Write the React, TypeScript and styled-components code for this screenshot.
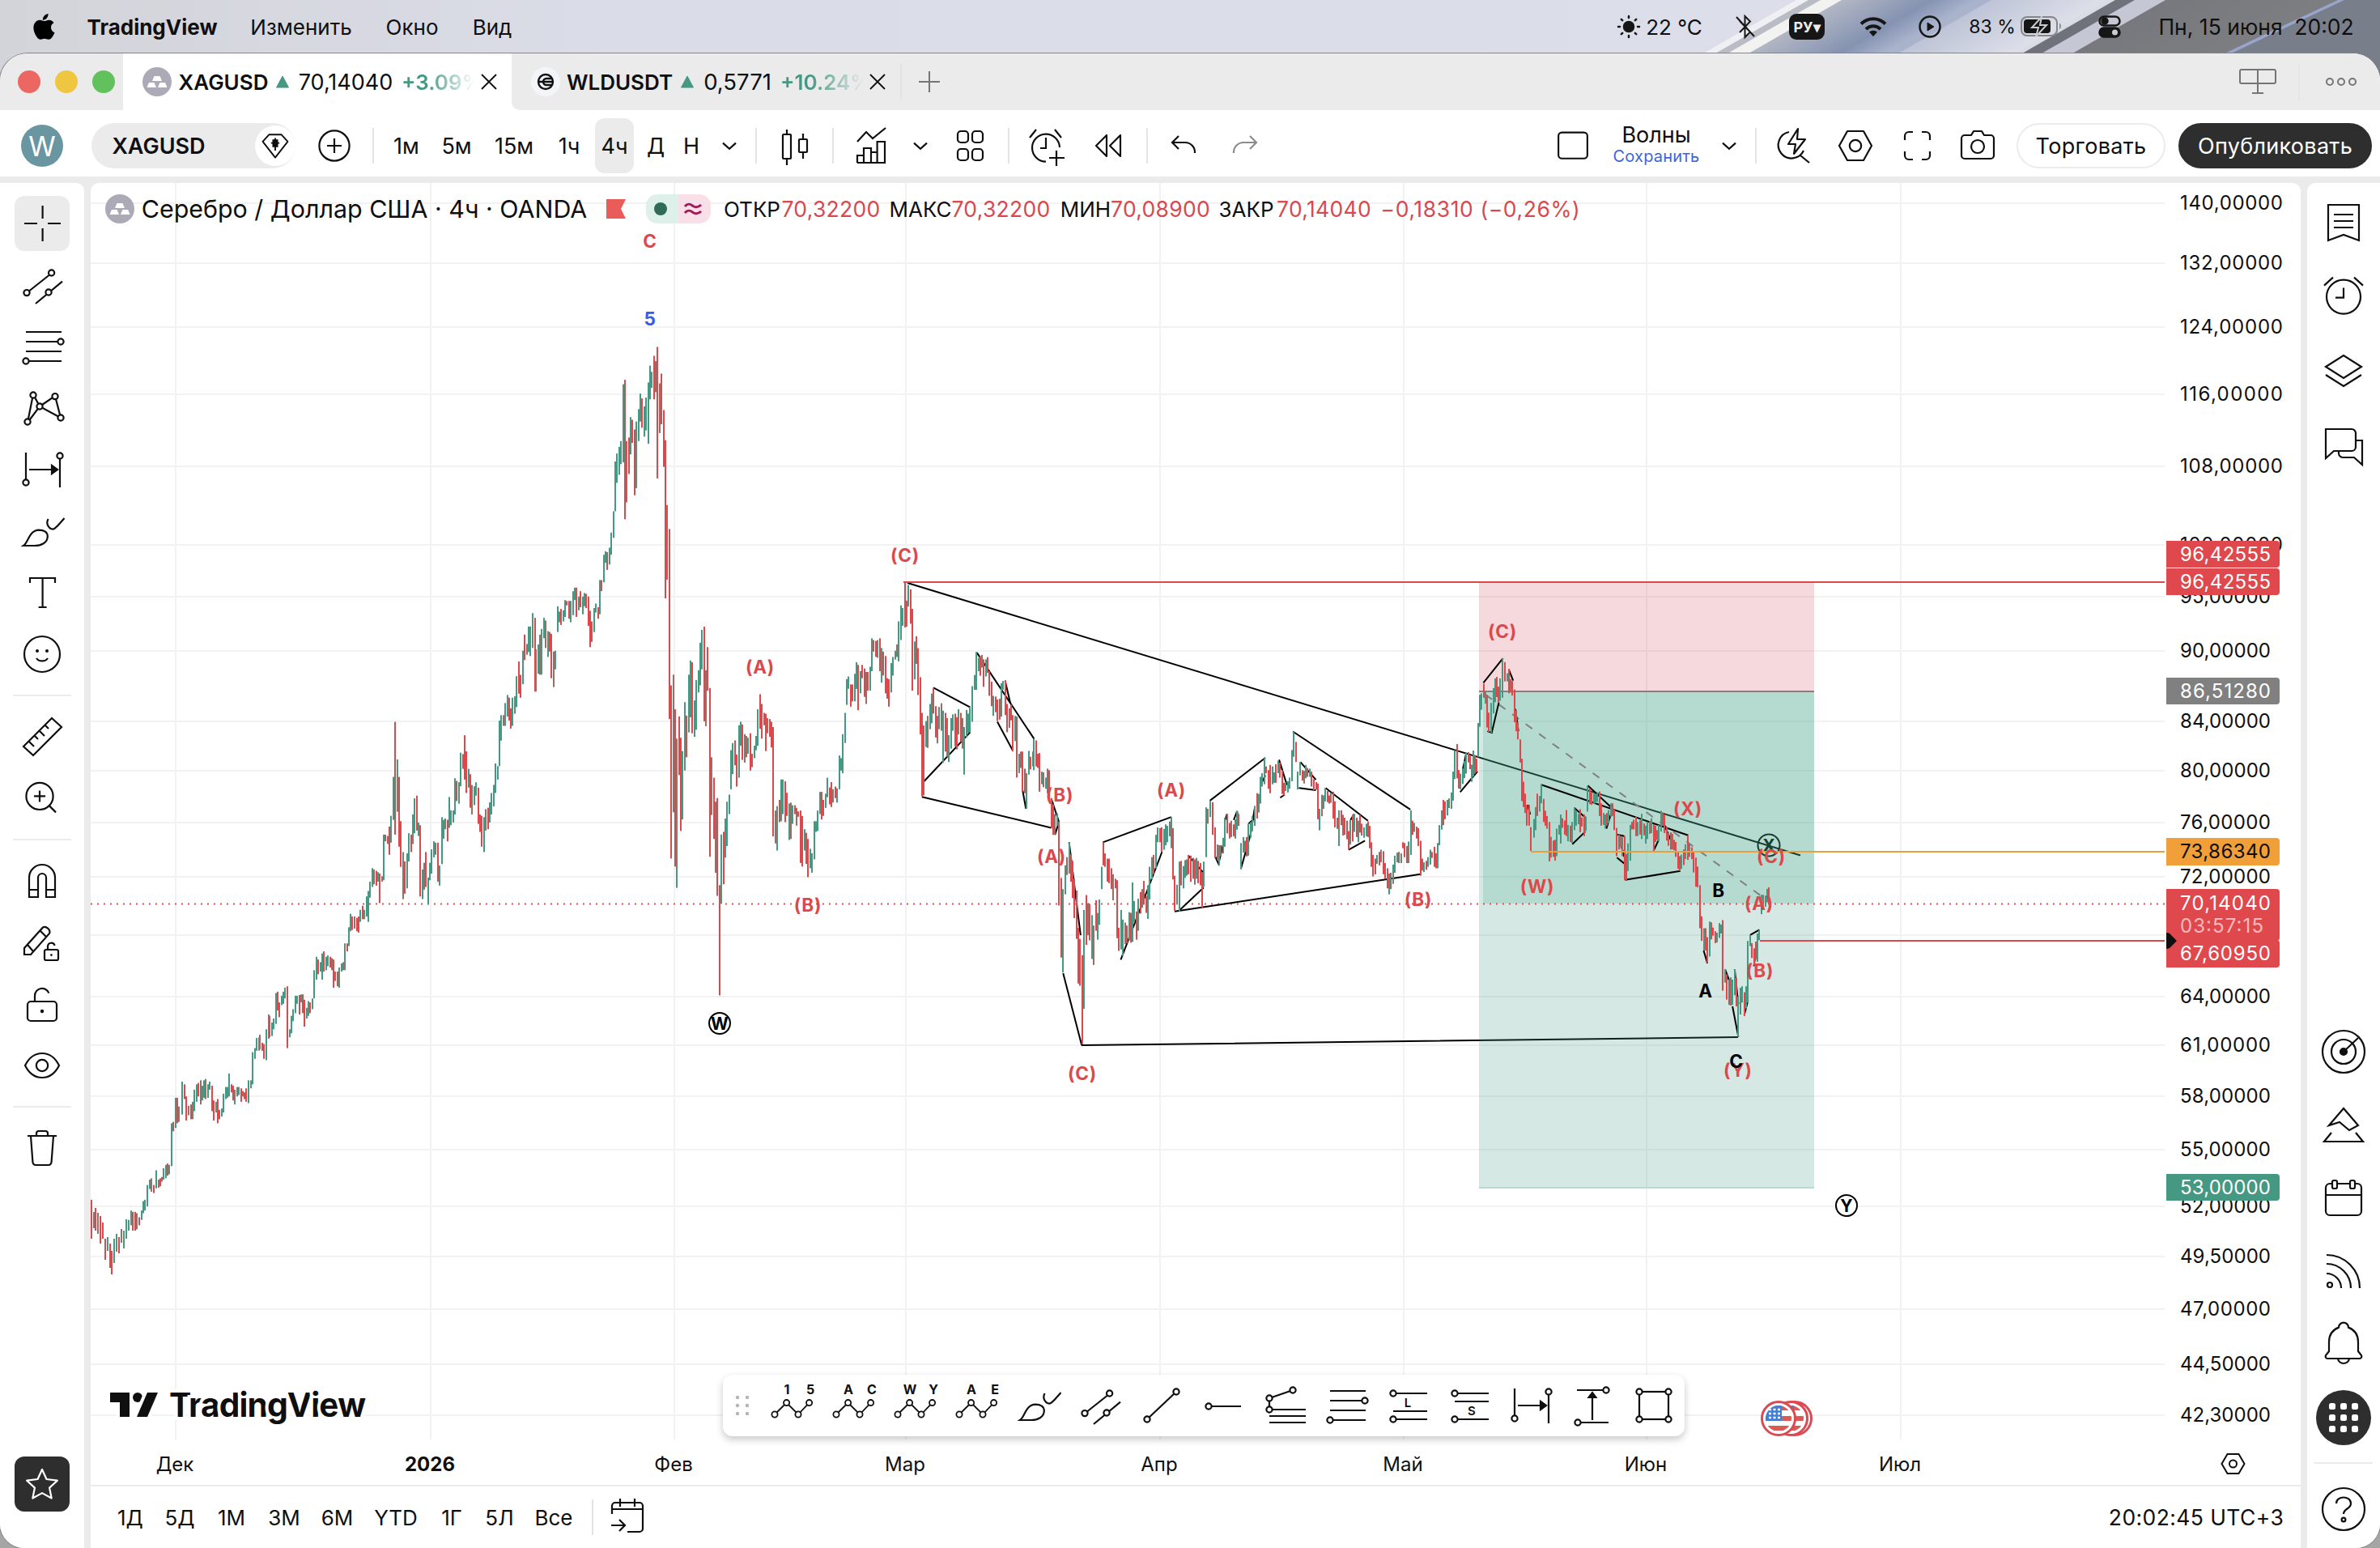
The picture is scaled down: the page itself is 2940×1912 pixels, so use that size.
import React from 'react';
import styled, { createGlobalStyle } from 'styled-components';

const GlobalStyle = createGlobalStyle`
  * {
    box-sizing: border-box;
  }
  body {
    margin: 0;
    width: 2940px;
    height: 1912px;
    overflow: hidden;
    background: #a5a5a5;
    color: #0f0f0f;
    font-family: Inter, 'Noto Sans', sans-serif;
  }
  svg {
    display: block;
    flex: none;
  }
`;

interface BoxStyle {
  $w?: number;
  $ml?: number;
}

interface LabelStyle extends BoxStyle {
  $size?: number;
  $weight?: number;
  $color?: string;
  $ls?: number;
}

const Page = styled.div`
  width: 2940px;
  height: 1912px;
  display: flex;
  flex-direction: column;
  position: relative;
`;

const Wallpaper = styled.svg`
  position: absolute;
  left: 0;
  top: 0;
`;

const MenuBar = styled.div`
  height: 66px;
  display: flex;
  align-items: center;
  position: relative;
`;

const AppWindow = styled.div`
  flex: 1;
  display: flex;
  flex-direction: column;
  background: #ebebeb;
  border-radius: 34px 34px 30px 30px;
  overflow: hidden;
  position: relative;
  box-shadow: 0 0 0 1px #85858c;
`;

const Label = styled.span<LabelStyle>`
  flex: none;
  display: flex;
  justify-content: center;
  white-space: nowrap;
  width: ${(p) => (p.$w ? `${p.$w}px` : 'auto')};
  margin-left: ${(p) => p.$ml || 0}px;
  font-size: ${(p) => p.$size || 27}px;
  font-weight: ${(p) => p.$weight || 400};
  color: ${(p) => p.$color || '#0f0f0f'};
  letter-spacing: ${(p) => p.$ls || 0}px;
`;

const Slot = styled.div<BoxStyle>`
  flex: none;
  width: ${(p) => p.$w || 56}px;
  margin-left: ${(p) => p.$ml || 0}px;
  display: flex;
  align-items: center;
  justify-content: center;
`;

const Spacer = styled.div`
  flex: 1;
`;

const InputBadge = styled(Slot)`
  height: 32px;
  border-radius: 9px;
  background: #161616;
  color: #ececec;
  font-size: 18px;
  font-weight: 700;
`;

const TabStrip = styled.div`
  height: 70px;
  display: flex;
  background: #ebebeb;
`;

const Lights = styled.div`
  width: 152px;
  display: flex;
  align-items: center;
  gap: 18px;
  padding-left: 22px;
`;

const Light = styled.i<{ $color: string }>`
  width: 28px;
  height: 28px;
  border-radius: 50%;
  background: ${(p) => p.$color};
`;

const Tab = styled.div<{ $active?: boolean; $w: number }>`
  width: ${(p) => p.$w}px;
  display: flex;
  align-items: center;
  background: ${(p) => (p.$active ? '#fff' : 'transparent')};
  border-radius: 8px 8px 0 0;
`;

const TabFill = styled.div`
  flex: 1;
  background: #fff;
  display: flex;
`;

const TabRest = styled.div`
  flex: 1;
  display: flex;
  align-items: center;
  background: #ebebeb;
  border-bottom-left-radius: 10px;
`;

const Change = styled(Label)<{ $tone: string }>`
  justify-content: flex-start;
  font-weight: 600;
  background: linear-gradient(90deg, #459882 35%, ${(p) => p.$tone} 100%);
  background-clip: text;
  -webkit-background-clip: text;
  color: transparent;
`;

const Divider = styled.i<{ $ml: number }>`
  flex: none;
  width: 2px;
  height: 44px;
  margin-left: ${(p) => p.$ml}px;
  background: #e4e4e4;
`;

const Toolbar = styled.div`
  height: 82px;
  margin-bottom: 8px;
  display: flex;
  align-items: center;
  background: #fff;
  padding-top: 6px;
`;

const Avatar = styled(Slot)`
  height: 52px;
  border-radius: 50%;
  background: #6996a0;
  color: #fff;
  font-size: 34px;
`;

const SymbolPill = styled.div`
  flex: none;
  width: 252px;
  height: 56px;
  margin-left: 35px;
  border-radius: 28px;
  background: #ebebeb;
  display: flex;
  align-items: center;
`;

const Knob = styled(Slot)`
  height: 50px;
  border-radius: 50%;
  background: #fff;
`;

const ActiveInterval = styled(Label)`
  height: 68px;
  align-items: center;
  border-radius: 12px;
  background: #ebebeb;
`;

const LayoutName = styled.div`
  flex: none;
  width: 110px;
  margin-left: 28px;
  display: flex;
  flex-direction: column;
  align-items: center;
  line-height: 26px;
`;

const PillButton = styled.div<{ $dark?: boolean; $w: number; $ml: number }>`
  flex: none;
  width: ${(p) => p.$w}px;
  height: 56px;
  margin-left: ${(p) => p.$ml}px;
  border-radius: 28px;
  border: 2px solid ${(p) => (p.$dark ? '#2e2e2e' : '#ebebeb')};
  background: ${(p) => (p.$dark ? '#2e2e2e' : '#fff')};
  color: ${(p) => (p.$dark ? '#fff' : '#0f0f0f')};
  display: flex;
  align-items: center;
  justify-content: center;
  font-size: 27px;
  letter-spacing: 0.3px;
`;

const Workspace = styled.div`
  flex: 1;
  display: flex;
  gap: 8px;
`;

const LeftRail = styled.div`
  width: 104px;
  background: #fff;
  border-top-right-radius: 10px;
  display: flex;
  flex-direction: column;
  align-items: center;
  padding: 12px 0 45px;
`;

const RailItem = styled.div`
  width: 68px;
  height: 76px;
  display: flex;
  align-items: center;
  justify-content: center;
`;

const ActiveTool = styled.div`
  width: 68px;
  height: 68px;
  border-radius: 12px;
  background: #ebebeb;
  display: flex;
  align-items: center;
  justify-content: center;
`;

const RailRule = styled.i<{ $gap?: number }>`
  width: 72px;
  height: 2px;
  margin: ${(p) => p.$gap || 12}px 0;
  background: #ebebeb;
`;

const StarButton = styled(ActiveTool)`
  background: #2e2e2e;
`;

const ChartColumn = styled.div`
  width: 2730px;
  background: #fff;
  border-radius: 10px 10px 0 0;
  display: flex;
  flex-direction: column;
  overflow: hidden;
`;

const ChartArea = styled.div`
  height: 1608px;
  position: relative;
`;

const Legend = styled.div`
  position: absolute;
  left: 16px;
  top: 12px;
  height: 40px;
  display: flex;
  align-items: center;
`;

const StatusPill = styled.div`
  width: 80px;
  height: 36px;
  margin-left: 24px;
  border-radius: 14px;
  background: linear-gradient(90deg, #def0ea 50%, #f8dfe8 50%);
  display: flex;
  align-items: center;
  justify-content: space-around;
`;

const DrawingBar = styled.div`
  position: absolute;
  left: 781px;
  top: 1472px;
  width: 1188px;
  height: 76px;
  border-radius: 12px;
  background: #fff;
  box-shadow: 0 4px 10px rgba(0, 0, 0, 0.22);
  display: flex;
  align-items: center;
`;

const RangeBar = styled.div`
  flex: 1;
  border-top: 2px solid #ebebeb;
  display: flex;
  align-items: center;
  padding-left: 31px;
`;

const RightRail = styled.div`
  flex: 1;
  background: #fff;
  border-top-left-radius: 10px;
  display: flex;
  flex-direction: column;
  align-items: center;
  padding: 3px 0 2px;
`;

const WidgetItem = styled.div<{ $h?: number }>`
  height: ${(p) => p.$h || 92}px;
  display: flex;
  align-items: center;
`;

const AppsButton = styled.div`
  width: 68px;
  height: 68px;
  border-radius: 50%;
  background: #2e2e2e;
  display: flex;
  align-items: center;
  justify-content: center;
`;

// ---------- icons, all on a 28 unit grid ----------

interface IconProps {
  size?: number;
  color?: string;
  sw?: number;
  children: React.ReactNode;
}

function Icon({ size = 56, color = '#0f0f0f', sw = 1.1, children }: IconProps) {
  return (
    <svg width={size} height={size} viewBox="0 0 28 28" fill="none" stroke={color} strokeWidth={sw}>
      {children}
    </svg>
  );
}

function Dots({ at, r = 1.8 }: { at: number[][]; r?: number }) {
  return (
    <>
      {at.map(([x, y]) => (
        <circle key={`${x}-${y}`} cx={x} cy={y} r={r} fill="#fff" />
      ))}
    </>
  );
}

const Chevron = () => (
  <Icon>
    <path d="M10 12.3l4 3.600 4-3.600" />
  </Icon>
);

const Close = () => (
  <Icon size={28} sw={1.8}>
    <path d="M5 5l18 18M23 5L5 23" />
  </Icon>
);

const Up = () => (
  <svg width="18" height="16" viewBox="0 0 18 16">
    <path d="M9 1l7.500 14h-15z" fill="#459882" stroke="#459882" strokeLinejoin="round" />
  </svg>
);

const SilverLogo = () => (
  <svg width="36" height="36" viewBox="0 0 36 36">
    <circle cx="18" cy="18" r="18" fill="#adaab8" />
    <path d="M14.500 11h7l2.500 6H12zM8 19h6.500l2.500 6H5.500zM21.500 19H28l2.500 6H19z" fill="#fff" />
  </svg>
);

const Brush = () => (
  <Icon>
    <path d="M2.500 23C5.500 21 6 13.500 12 13.300c3.400 0 5.400 1.500 5.400 4 0 4-4 5.700-8 5.700zM17.800 6.500c-1.800 3 .6 6.300 2.800 6.300 1.900 0 4.500-4 7.200-6.800" />
  </Icon>
);

const Channel = () => (
  <Icon>
    <path d="M5 18.500L19.500 7M10 25.500L26.500 11.800" />
    <Dots at={[[4.500, 18.800], [19.800, 6.500], [18, 18.500]]} />
  </Icon>
);

const FibLines = () => (
  <Icon>
    <path d="M4 5h22M4 11h22M4 17h22M4 23h22" />
    <Dots at={[[25.500, 11], [4, 23]]} />
  </Icon>
);

const DateRange = () => (
  <Icon>
    <path d="M4 3.500V22M25 6v19M6 14h15" />
    <path d="M20 11.500l3.500 2.500-3.500 2.500z" fill="#0f0f0f" />
    <Dots at={[[4, 22], [25, 5.500]]} />
  </Icon>
);

function Wave({ a, b }: { a: string; b: string }) {
  return (
    <Icon sw={0.9}>
      <path d="M3 19.500l7.300-7.200 7.200 7.200 6.800-7.200" />
      <Dots at={[[3, 19.500], [10.300, 12.300], [17.500, 19.500], [24.300, 12.300]]} />
      <g fill="#0f0f0f" stroke="none" fontSize="8" fontWeight="700" textAnchor="middle">
        <text x="10.500" y="7">{a}</text>
        <text x="25" y="7">{b}</text>
      </g>
    </Icon>
  );
}

const Padlock = () => (
  <>
    <rect x="5" y="12.500" width="18" height="12" rx="2" />
    <path d="M9.500 12.500V9a4.500 4.500 0 0 1 8.700-1.700" />
    <circle cx="14" cy="18.500" r="1.100" fill="#0f0f0f" stroke="none" />
  </>
);

const leftTools: React.ReactNode[][] = [
  [
    <Channel key="channel" />,
    <FibLines key="fib" />,
    <Icon key="pattern">
      <path d="M5 23L8.500 5.500 12.500 13 5 23M12.500 13L22 6.500 25.500 20z" />
      <Dots at={[[5, 22.500], [8.500, 6], [12.500, 13], [22, 6.800], [25.500, 20]]} />
    </Icon>,
    <DateRange key="range" />,
    <Brush key="brush" />,
    <Icon key="text">
      <path d="M6.500 8V5h15.500v3M14.300 5v18M11.800 23h5" />
    </Icon>,
    <Icon key="smile">
      <circle cx="14" cy="14" r="11" />
      <path d="M10.500 16.500c1.500 2.300 5.500 2.300 7 0" />
      <circle cx="11" cy="12" r="1" fill="#0f0f0f" stroke="none" />
      <circle cx="17" cy="12" r="1" fill="#0f0f0f" stroke="none" />
    </Icon>,
  ],
  [
    <Icon key="ruler">
      <path d="M2.500 20L20 2.500l6 5.500L8.500 25.500zM6 17l3 3M9.500 13.500l2 2M12.500 10.500l3 3M16 7l2 2" />
    </Icon>,
    <Icon key="zoom">
      <circle cx="12.500" cy="12.700" r="8.300" />
      <path d="M9 12.700h7M12.500 9.200v7M18.500 18.700l4 4" />
    </Icon>,
  ],
  [
    <Icon key="magnet">
      <path d="M6 24V12a8 8 0 0 1 16 0V24h-5.500V12a2.500 2.500 0 0 0-5 0V24zM6 19.500h5.500M16.500 19.500H22" />
    </Icon>,
    <Icon key="pencil">
      <path d="M3 17.500v4h4L18.500 8.500c1-2-2-5-4-3.800zM12.500 6.500l4 4M5 15.500l3.500 4" />
      <rect x="15.500" y="18.500" width="8.500" height="6.500" rx="1" />
      <path d="M17.500 18.500V16.500a2.200 2.200 0 0 1 4.300-.6" />
      <circle cx="19.700" cy="21.800" r=".7" fill="#0f0f0f" stroke="none" />
    </Icon>,
    <Icon key="lock">
      <Padlock />
    </Icon>,
    <Icon key="eye">
      <path d="M3.500 14c5-10 16-10 21 0-5 10-16 10-21 0z" />
      <circle cx="14" cy="14" r="3.600" />
    </Icon>,
  ],
];

const drawingTools: React.ReactNode[] = [
  <Wave key="w1" a="1" b="5" />,
  <Wave key="w2" a="A" b="C" />,
  <Wave key="w3" a="W" b="Y" />,
  <Wave key="w4" a="A" b="E" />,
  <Brush key="brush" />,
  <Channel key="channel" />,
  <Icon key="trend">
    <path d="M5 22.500L23 5.500" />
    <Dots at={[[5, 22.500], [23, 5.500]]} />
  </Icon>,
  <Icon key="ray">
    <path d="M4 14.500h21" />
    <Dots at={[[5, 14.500]]} />
  </Icon>,
  <Icon key="fibext">
    <path d="M4.500 16.500v-7L19 4.500M4.500 16.500H27M4.500 20.500H27M4.500 24.500H27" />
    <Dots at={[[4.500, 9.500], [4.500, 16.500], [19, 4.500]]} />
  </Icon>,
  <FibLines key="fib" />,
  <Icon key="long">
    <path d="M5 6.500h21M5 17.500h21M5 22.500h21" />
    <Dots at={[[5, 6.500], [5, 22.500]]} />
    <text x="14" y="15.200" fontSize="7.500" fontWeight="600" textAnchor="middle" fill="#0f0f0f" stroke="none">L</text>
  </Icon>,
  <Icon key="short">
    <path d="M5 6.500h21M5 11.500h21M5 22.500h21" />
    <Dots at={[[5, 6.500], [5, 22.500]]} />
    <text x="15.500" y="20" fontSize="7.500" fontWeight="600" textAnchor="middle" fill="#0f0f0f" stroke="none">S</text>
  </Icon>,
  <DateRange key="range" />,
  <Icon key="pricerange">
    <path d="M4.500 4.500h18M5 24.500h19M14 23V7" />
    <path d="M11.800 9L14 6l2.200 3z" fill="#0f0f0f" />
    <Dots at={[[22.500, 4.500], [5, 24.500]]} />
  </Icon>,
  <Icon key="rect">
    <rect x="5" y="5.500" width="18" height="17" />
    <Dots at={[[5, 5.500], [23, 5.500], [5, 22.500], [23, 22.500]]} />
  </Icon>,
];

const topWidgets: React.ReactNode[] = [
  <Icon key="list">
    <path d="M4.500 3h19v22L14 21.500 4.500 25zM8 9h12M8 13h12M8 17h12" />
  </Icon>,
  <Icon key="alarm">
    <circle cx="14" cy="13.800" r="10.500" />
    <path d="M14 8.300v6H9M2 6.800L7.500 1.800M26 6.800l-5.500-5" />
  </Icon>,
  <Icon key="layers">
    <path d="M3 11l11-7 11 7-11 7zM3 16l11 7 11-7" />
  </Icon>,
  <Icon key="chat">
    <path d="M3 3.500h16a2.500 2.500 0 0 1 2.500 2.500v8.500a2.500 2.500 0 0 1-2.500 2.500H8L3 21.500zM21.500 10.500h4v15l-5-4.500h-7a2.500 2.500 0 0 1-2.500-2.500V17" />
  </Icon>,
];

const bottomWidgets: React.ReactNode[] = [
  <Icon key="radar">
    <circle cx="14" cy="14" r="13" />
    <circle cx="14" cy="14" r="7.500" />
    <path d="M14 14l9-8.500" />
    <circle cx="14" cy="14" r="2" fill="#0f0f0f" />
  </Icon>,
  <Icon key="pine">
    <path d="M5 14.500L14 4l9 10.500-5.500 3-6-5zM6.500 19L2 24.500h24L21.500 19" />
  </Icon>,
  <Icon key="calendar">
    <rect x="3" y="5" width="22" height="19.500" rx="2.500" />
    <path d="M3 12h22" />
    <rect x="7" y="3" width="3" height="5" fill="#fff" rx="1" />
    <rect x="18" y="3" width="3" height="5" fill="#fff" rx="1" />
  </Icon>,
  <Icon key="feed">
    <circle cx="5.500" cy="22.500" r="1.500" />
    <path d="M3.500 15.500a9 9 0 0 1 9 9M3.500 9.500a15 15 0 0 1 15 15M3.500 4a20.500 20.500 0 0 1 20.500 20.500" />
  </Icon>,
  <Icon key="bell">
    <path d="M11 3.800a3 3 0 0 1 6 0c4 1.500 6 4.500 6 9v5.700l2 2.500c.5 1-.2 2-1 2H4c-.8 0-1.500-1-1-2l2-2.500v-5.700c0-4.500 2-7.500 6-9zM10.500 23c.5 4 6.500 4 7 0" />
  </Icon>,
];

// ---------- chart data ----------

interface Series {
  x: number;
  y: number;
  kx: number;
  ky: number;
  bars: string;
  lines: string;
}

// each bar is "x high low colour", each line is "x y x y ..."
const series: Series[] = [
  {
    x: 0,
    y: 0,
    kx: 1,
    ky: 1,
    bars:
      '113 1482 1530 r,116 1497 1517 m,118 1492 1520 r,121 1498 1524 m,124 1502 1536 r,127 1510 1530 r,130 1530 1556 r,133 1528 1545 g,136 1536 1566 r,138 1545 1574 r,141 1530 1560 g,144 1524 1546 g,147 1528 1548 r,150 1518 1535 m,153 1520 1542 g,156 1506 1530 g',
    lines: '',
  },
  {
    x: 0,
    y: 220,
    kx: 0.4464,
    ky: 0.8291,
    bars:
      '357 1552 1568 g,362 1538 1560 g,368 1540 1568 r,374 1540 1568 r,379 1542 1566 m,385 1548 1560 r,391 1538 1552 g,396 1524 1542 g,402 1522 1538 g,408 1500 1532 g,415 1492 1506 g,420 1490 1510 m,425 1500 1512 r,432 1478 1505 g,438 1492 1504 m,443 1490 1502 r,448 1488 1495 m,452 1475 1492 g,459 1470 1490 g,463 1468 1486 r,468 1470 1484 g,475 1408 1472 g,480 1406 1420 r,486 1370 1415 g,491 1370 1408 r,496 1383 1406 m,505 1346 1395 g,510 1350 1372 r,516 1368 1404 r,521 1382 1396 m,528 1380 1402 r,533 1376 1402 g,538 1358 1390 g,544 1350 1376 g,549 1348 1368 r,555 1344 1380 m,560 1352 1374 g,565 1344 1370 g,570 1342 1372 m,576 1350 1370 g,580 1346 1358 g,587 1352 1390 r,592 1374 1404 r,598 1376 1392 g,603 1372 1408 r,608 1388 1402 r,614 1386 1398 g,619 1364 1392 g,625 1354 1372 g,630 1354 1370 g,634 1334 1368 g,641 1350 1362 r,645 1352 1374 r,650 1358 1380 g,656 1354 1368 m,661 1354 1366 g,667 1356 1376 r,672 1360 1368 m,677 1362 1372 r,682 1356 1376 r,688 1344 1378 g,694 1344 1356 g,700 1302 1350 g,705 1296 1312 g,710 1281 1300 g,716 1280 1300 g,720 1276 1298 m,725 1288 1300 r,730 1290 1312 r,737 1268 1314 g,743 1246 1282 g,747 1248 1280 r,753 1258 1278 g,757 1252 1268 g,764 1214 1260 g,768 1212 1240 r,773 1228 1250 r,779 1218 1232 g,784 1212 1230 g,789 1206 1222 g,795 1204 1296 r,801 1268 1280 g,806 1248 1274 g,811 1238 1256 g,817 1218 1244 g,823 1218 1230 g,828 1217 1246 r,834 1216 1228 g,838 1216 1244 r,843 1224 1264 r,849 1236 1252 g,854 1226 1248 g,859 1228 1244 r,864 1222 1238 g,870 1180 1222 g,876 1160 1194 g,881 1164 1186 r,886 1168 1182 g,892 1155 1194 g,897 1152 1182 r,902 1160 1180 g,908 1158 1174 g,913 1160 1176 r,918 1162 1180 m,923 1164 1206 r,928 1182 1196 m,934 1182 1204 r,939 1176 1206 g,945 1170 1182 g,950 1168 1180 m,955 1140 1180 g,961 1140 1152 r,966 1116 1144 g,970 1096 1122 g,975 1100 1120 r,981 1100 1118 m,987 1102 1122 r,992 1100 1124 r,997 1090 1108 g,1003 1084 1104 r,1008 1090 1104 g,1014 1070 1100 g,1019 1062 1108 g,1024 1048 1072 g,1030 1028 1056 g,1036 1030 1052 m,1041 1032 1054 r,1046 1034 1048 g,1051 1036 1080 r,1057 1040 1048 m,1062 978 1046 g,1067 978 988 r,1073 980 992 m,1077 966 1008 r,1083 950 990 g,1088 892 956 g,1093 810 978 r,1100 866 944 g,1104 892 996 r,1109 958 1026 r,1116 1004 1074 m,1121 1018 1066 r,1126 1006 1058 g,1132 976 1018 g,1137 978 1004 r,1143 948 992 g,1148 924 976 g,1153 920 972 r,1158 960 980 g,1163 964 1070 r,1169 1030 1074 g,1174 1020 1060 m,1178 1004 1056 r,1185 1042 1082 g,1190 1020 1046 g,1195 1000 1036 g,1201 988 1012 g,1206 990 1008 m,1211 990 1048 r,1216 1024 1054 g,1222 952 1022 g,1228 956 984 g,1233 954 970 m,1238 956 988 r,1243 922 968 g,1248 942 964 g,1254 942 960 g,1259 894 948 g,1264 898 928 r,1270 900 932 g,1275 856 906 g,1281 858 880 r,1286 830 896 r,1290 854 916 r,1296 880 908 g,1301 888 938 r,1307 904 948 m,1312 906 934 g,1317 900 920 g,1323 908 962 r,1328 948 974 r,1333 950 996 r,1339 952 1004 g,1344 940 972 m,1350 938 970 r,1355 930 960 g,1360 916 948 g,1366 904 936 g,1371 872 916 g,1377 876 896 g,1382 808 876 g,1387 800 838 g,1393 800 816 m,1398 782 816 g,1404 770 802 g,1409 774 808 r,1413 790 820 r,1419 774 816 g,1424 772 798 g,1429 742 788 g,1436 720 768 r,1441 740 774 r,1447 704 754 g,1452 680 718 r,1458 694 710 m,1463 668 706 g,1468 668 712 g,1474 648 700 g',
    lines: '',
  },
  {
    x: 660,
    y: 400,
    kx: 0.3333,
    ky: 0.5485,
    bars:
      '2 662 828 r,6 733 828 m,15 722 788 g,21 700 790 m,27 687 790 g,37 662 708 g,43 668 730 m,51 692 750 g,57 694 738 r,63 698 798 r,72 738 818 m,78 736 778 g,87 636 694 g,93 648 672 g,99 642 678 r,108 645 670 g,114 622 660 g,120 624 634 r,129 624 664 r,135 624 672 g,144 602 656 g,150 594 622 g,156 594 660 r,165 614 645 g,171 602 638 r,180 614 654 g,186 606 636 g,192 608 640 r,201 614 680 r,207 646 728 r,213 670 716 r,222 640 694 g,228 630 650 g,237 638 664 r,243 577 654 g,249 577 602 r,258 520 582 g,264 512 538 g,270 514 554 r,279 504 542 g,285 470 520 g,294 422 482 g,300 310 422 g,306 292 358 g,315 277 340 g,321 264 316 g,330 136 312 g,336 126 440 r,342 264 402 m,351 256 338 r,357 210 294 g,363 216 268 r,372 238 386 r,378 220 370 g,387 192 264 g,393 157 220 g,399 168 234 r,408 186 254 g,414 166 240 g,423 132 270 g,429 94 170 g,435 108 144 g,444 72 170 r,450 84 154 m,456 52 348 r,465 134 246 m,471 112 226 r,480 194 322 r,486 262 618 r,492 408 576 m,501 462 890 r,507 814 1204 r,516 790 1100 m,522 868 1222 r,528 934 1270 g,537 884 1016 r,543 932 1142 r,549 962 1116 g,558 852 1006 g,564 882 976 r,573 790 920 g,579 758 886 g,585 762 922 r,594 848 930 g,600 802 914 g,609 780 830 g,615 718 814 g,621 689 778 g,630 682 895 r,636 780 906 m,642 728 826 r,651 820 1200 r,657 976 1106 m,666 1022 1160 r,672 1076 1236 m,678 1068 1288 r,687 1264 1512 r,693 1150 1306 g,702 1144 1262 r,708 1114 1202 g,714 1076 1176 g,723 1060 1104 g,729 960 1048 g,735 944 1014 g,744 938 994 r,750 970 1042 r,759 904 1022 g,765 896 950 g,771 902 982 r,780 924 988 m,786 928 976 m,792 932 968 g,801 922 1006 r,807 968 998 r,816 950 978 g,822 928 960 g,828 868 950 g,837 834 912 r,843 856 934 r,852 876 904 r,858 878 962 r,864 888 922 m,873 890 930 r,879 896 954 r,885 908 1154 r,894 1096 1170 m,900 1086 1186 g,909 1072 1122 r,915 1026 1120 g,921 1026 1104 g,930 1030 1122 r,936 1056 1108 r,945 1080 1162 g,951 1078 1160 m,957 1084 1126 g,966 1084 1104 r,972 1090 1130 m,978 1098 1110 r,987 1096 1214 r,993 1108 1222 r,1002 1138 1186 g,1008 1146 1216 r,1014 1160 1246 r,1023 1182 1226 g,1029 1192 1236 g,1038 1120 1206 g,1044 1120 1144 g,1050 1096 1142 g,1059 1054 1104 g,1065 1054 1116 r,1071 1072 1108 r,1080 1058 1090 g,1086 1022 1066 g,1095 1044 1082 r,1101 1032 1088 r,1107 1048 1078 m,1116 1042 1068 r,1122 1046 1078 g,1131 972 1048 g,1137 978 1006 g,1143 924 1012 g,1152 876 944 g,1158 800 858 g,1164 794 822 g,1173 812 862 r,1179 812 850 r,1188 788 850 g,1194 762 822 g,1200 768 870 r,1209 782 832 g,1215 768 798 r,1224 776 840 r,1230 784 856 m,1236 784 826 r,1245 772 826 g,1251 708 782 g,1257 712 738 r,1266 714 750 r,1272 712 752 g,1281 708 782 r,1287 730 808 g,1293 738 792 r,1302 748 832 r,1308 798 844 r,1314 800 862 r,1323 764 830 g,1329 750 792 g,1338 736 756 g,1344 722 750 m,1350 670 760 g,1359 634 712 g,1365 640 680 g',
    lines: '',
  },
  {
    x: 1080,
    y: 650,
    kx: 0.4592,
    ky: 0.4592,
    bars:
      '83 148 272 r,87 200 270 m,92 158 216 g,98 170 262 r,103 222 442 r,108 310 412 g,113 296 370 r,118 328 454 r,124 406 560 r,129 502 726 r,132 536 724 r,139 524 594 g,144 510 596 m,150 478 546 g,155 450 530 g,160 434 504 r,166 484 568 r,170 510 584 m,175 486 546 g,181 476 550 m,185 496 636 g,191 502 606 r,196 516 620 m,201 562 634 g,206 516 598 g,211 506 550 g,217 504 592 r,222 514 600 r,227 492 560 g,232 502 580 r,237 516 598 m,242 540 668 g,248 494 568 g,253 504 556 g,258 486 554 g,264 430 526 g,270 400 440 g,275 338 440 g,280 354 390 g,285 350 402 r,290 346 380 m,295 358 432 r,300 358 404 g,305 352 394 r,310 390 456 r,316 418 484 r,321 456 510 g,327 458 500 r,331 466 524 r,337 464 520 r,342 422 512 g,347 416 440 g,352 414 508 r,358 478 554 r,363 490 542 m,368 480 522 r,373 508 606 r,378 510 578 g,383 512 676 r,389 612 664 g,394 606 650 m,399 606 714 r,404 652 718 r,409 664 760 g,415 604 668 g,420 620 654 r,426 606 646 m,430 572 656 g,435 576 646 r,440 612 650 r,445 610 714 r,451 660 694 g,456 662 702 m,461 676 706 g,466 652 718 m,471 656 730 r,477 732 812 r,481 748 830 r,486 774 830 m,492 772 806 g,497 794 1020 r,503 946 1160 r,508 976 1200 g,513 912 990 g,518 890 938 r,524 850 934 g,529 882 956 r,534 900 1000 r,538 948 1054 r,544 980 1110 r,549 1080 1230 r,553 1110 1236 r,560 1154 1394 r,564 1032 1298 g,570 992 1126 r,575 1014 1100 m,580 1016 1114 r,586 1046 1164 g,590 1074 1180 m,597 1006 1088 r,601 1040 1112 g,606 1004 1072 g,612 916 976 g,616 850 912 r,621 880 916 r,627 894 956 r,632 894 960 r,638 920 976 r,643 936 1006 m,648 948 974 r,653 952 1108 r,658 1080 1142 r,664 1032 1138 g,669 1058 1156 g,674 1066 1124 m,679 1074 1122 r,685 1038 1114 g,690 1040 1120 r,695 958 1118 g,700 1008 1066 g,706 1036 1112 r,711 1002 1088 g,716 984 1042 r,721 976 1026 m,726 954 1018 r,731 994 1040 r,736 966 1056 g,741 916 1004 g,746 890 950 g,752 884 936 r,757 830 920 g,763 810 850 g,768 812 850 r,774 810 876 r,779 814 870 g,784 802 858 g,789 806 850 g,794 794 834 m,799 782 866 g,803 812 950 r,808 940 1034 r,814 964 1018 m,820 902 1036 g,825 900 966 r,831 914 974 g,836 898 946 g,841 896 940 m,846 884 936 r,851 886 956 r,857 892 948 r,862 896 964 m,867 892 948 g,872 900 960 r,877 906 966 r,882 930 1026 r,887 902 970 g,892 756 890 g,898 760 800 m,903 738 782 g,911 742 830 r,917 810 892 r,923 856 898 m,928 858 912 g,933 858 888 r,938 838 880 g,944 784 862 g,949 774 826 r,955 798 840 r,960 792 836 m,966 802 834 r,971 788 840 g,975 766 816 g,980 774 806 r,986 852 922 g,992 836 878 g,997 846 876 r,1001 836 888 r,1007 800 886 g,1013 796 838 g,1018 780 820 g,1023 752 806 g,1029 718 786 r,1034 720 770 g,1039 674 746 g,1044 664 700 g,1049 622 694 g,1054 646 664 r,1060 656 706 r,1065 642 718 r,1071 646 694 g,1076 662 690 g,1081 640 690 r,1087 630 664 g,1092 636 676 r,1097 656 720 r,1102 690 724 r,1107 688 712 g,1112 686 716 g,1118 676 706 g,1124 602 686 g,1129 552 620 g,1134 580 634 r,1140 660 708 g,1146 634 670 g,1151 656 684 r,1156 658 692 m,1161 642 678 g,1166 650 674 r,1171 652 674 g,1176 660 700 r,1182 680 710 r,1188 688 708 r,1193 692 788 r,1198 760 818 g,1204 722 780 m,1209 724 760 g,1214 704 740 g,1219 712 742 r,1224 724 746 r,1229 716 744 g,1234 714 786 r,1240 740 810 r,1245 784 814 r,1250 764 860 g,1256 764 804 r,1261 776 832 m,1266 784 830 r,1271 792 842 r,1276 820 870 r,1281 790 856 g,1286 776 848 r,1292 774 822 g,1297 784 836 r,1302 792 850 g,1307 776 824 r,1312 800 832 r,1317 810 838 g,1323 800 834 g,1328 794 836 r,1332 806 866 r,1337 850 916 r,1342 884 942 r,1347 894 936 r,1353 884 908 g,1358 876 912 r,1363 870 904 g,1369 874 936 r,1375 906 948 r,1380 920 974 r,1385 934 990 g,1390 932 976 r,1396 910 962 g,1401 886 932 g,1407 878 904 g,1412 876 906 r,1417 880 906 g,1422 850 866 r,1427 852 890 r,1432 860 906 r,1438 848 906 g,1443 764 884 g,1448 792 830 r,1453 798 822 m,1458 808 840 r,1464 812 860 r,1469 846 940 r,1474 894 926 r,1479 904 930 g,1485 900 924 r,1490 890 916 g,1495 870 910 g,1500 876 892 r,1506 862 916 r,1511 880 920 r,1515 852 920 g,1521 804 858 g,1526 764 816 g,1531 736 804 r,1536 740 788 r,1542 736 778 g,1547 732 758 m,1552 716 760 g,1557 660 738 g,1562 602 680 g,1567 586 678 r',
    lines:
      '159 434 258 487,134 686 258 554,128 728 476 811,276 340 430 572,352 416 366 476,331 526 372 602,399 710 408 760,476 732 497 796,486 830 494 804,508 1202 558 1396,524 850 555 1100,615 850 799 782,663 1166 774 876,808 1036 1469 936,820 1034 886 972,845 886 884 930,903 738 1052 623,917 888 926 908 940 850,944 790 949 774,986 922 1012 830 1023 760,1007 800 1022 786,1040 694 1052 670,1089 628 1110 696,1092 730 1104 722,1126 552 1442 762,1146 634 1188 682,1142 704 1188 710,1214 704 1328 792,1276 870 1320 846,1281 790 1291 774,967 790 976 766 980 800',
  },
  {
    x: 1780,
    y: 680,
    kx: 0.3827,
    ky: 0.4592,
    bars:
      '58 590 640 r,64 600 642 g,70 586 628 g,76 566 612 g,82 544 600 g,88 542 570 r,93 552 588 r,99 576 622 g,105 538 608 g,110 550 600 r,116 560 596 r,119 464 556 g,126 388 474 g,131 384 428 g,138 358 396 r,144 380 412 g,149 388 476 r,155 436 488 r,162 410 490 g,170 370 438 g,175 344 408 g,180 340 394 r,186 366 410 r,192 344 404 g,199 290 396 g,207 300 352 r,213 330 352 g,219 318 384 r,225 346 382 m,231 350 390 r,237 374 462 r,243 430 486 r,249 462 508 r,255 508 570 r,261 560 674 r,267 622 690 r,271 654 706 r,277 684 740 r,285 684 740 r,291 744 808 r,300 722 772 g,306 690 752 g,311 654 714 r,318 660 702 g,324 628 680 g,331 668 730 r,337 700 740 r,343 714 748 r,350 730 836 r,356 770 826 g,362 780 824 r,368 778 834 r,374 748 822 g,381 738 764 g,387 710 788 g,393 720 746 r,399 726 764 r,405 698 768 r,411 738 782 g,417 740 784 r,423 730 786 g,430 692 752 g,437 700 740 g,443 708 736 g,449 696 758 r,455 718 742 r,462 710 768 r,468 716 754 g,474 632 702 g,480 640 682 r,487 650 684 r,493 652 682 g,499 656 680 g,505 650 676 g,512 648 714 r,518 680 740 r,524 706 738 g,530 710 748 g,536 706 740 r,542 698 734 g,548 680 716 g,554 680 714 r,560 696 752 r,566 746 822 r,574 764 804 r,580 768 798 g,586 770 822 m,593 768 886 r,598 816 886 r,604 788 862 g,611 738 834 g,617 730 750 r,623 724 750 r,629 716 768 r,636 730 768 g,642 726 764 r,648 708 776 g,655 734 766 r,661 740 788 g,667 730 776 g,673 728 762 m,680 720 760 g,686 736 808 r,692 740 784 r,698 752 778 r,704 738 782 g,710 700 756 g,716 706 740 r,722 710 760 r,729 744 780 r,735 760 794 r,741 758 804 r,747 762 804 m,753 778 806 r,759 784 824 r,765 810 856 r,771 822 862 r,777 818 856 g,784 804 846 r,790 790 830 g,796 766 832 r,803 788 824 m,809 798 830 r,815 812 866 r,823 826 904 r,828 850 906 r,836 900 1016 r,842 984 1050 r,848 1016 1076 g,855 1016 1076 r,860 1040 1108 r,867 998 1092 g,873 1000 1046 r,879 1014 1036 r,886 1024 1056 r,892 1028 1054 g,898 1002 1042 g,904 1006 1030 g,909 994 1184 r,917 1126 1162 g,923 1140 1208 r,929 1154 1222 r,935 1148 1224 g,941 1154 1222 g,948 1126 1196 g,954 1150 1226 r,960 1200 1308 g,967 1176 1248 g,973 1172 1216 g,979 1188 1252 r,985 1172 1232 g,991 1050 1216 g,998 1034 1064 g,1004 1056 1096 r,1010 1070 1116 r,1016 1052 1100 r,1022 1030 1106 g,1028 1020 1048 g,1035 926 978 g,1041 926 960 m,1047 928 958 g,1053 910 946 g,1058 906 950 r',
    lines:
      '62 650 118 594,70 590 82 544,137 356 200 290,150 486 164 490 187 408,219 320 233 350,240 426 250 486,324 630 798 766,424 790 466 756,430 692 466 718,474 632 554 694 534 748,568 764 592 768,568 826 592 842,576 776 592 824,594 886 773 862,686 808 704 776,722 740 753 800,848 1076 860 1110,917 1126 932 1160,941 1226 960 1308,948 1126 960 1220,979 1250 991 1210,998 1034 1028 1020,1010 1118 1018 1070,280 684 288 710',
  },
];

const barColors: Record<string, string> = { g: '#459882', r: '#dc484b', m: '#9b6d66' };

const priceTicks: [string, number][] = [
  ['140,00000', 250],
  ['132,00000', 324],
  ['124,00000', 403],
  ['116,00000', 486],
  ['108,00000', 575],
  ['100,00000', 672],
  ['95,00000', 736],
  ['90,00000', 803],
  ['84,00000', 890],
  ['80,00000', 951],
  ['76,00000', 1015],
  ['72,00000', 1082],
  ['', 1154],
  ['64,00000', 1230],
  ['61,00000', 1290],
  ['58,00000', 1353],
  ['55,00000', 1419],
  ['52,00000', 1489],
  ['49,50000', 1551],
  ['47,00000', 1616],
  ['44,50000', 1684],
  ['42,30000', 1747],
];

const timeTicks: [string, number][] = [
  ['Дек', 216],
  ['2026', 531],
  ['Фев', 832],
  ['Мар', 1118],
  ['Апр', 1432],
  ['Май', 1733],
  ['Июн', 2033],
  ['Июл', 2347],
];

const RED = '#dc484b';

const waveLabels: [string, number, number, string][] = [
  ['C', 803, 298, RED],
  ['5', 803, 394, '#3a5bea'],
  ['(A)', 939, 824, RED],
  ['(B)', 998, 1118, RED],
  ['(C)', 1118, 686, RED],
  ['(B)', 1309, 982, RED],
  ['(A)', 1299, 1058, RED],
  ['(C)', 1337, 1326, RED],
  ['(A)', 1447, 976, RED],
  ['(B)', 1752, 1111, RED],
  ['(C)', 1856, 780, RED],
  ['(W)', 1899, 1095, RED],
  ['(X)', 2085, 999, RED],
  ['(C)', 2188, 1058, RED],
  ['(A)', 2173, 1116, RED],
  ['(B)', 2174, 1199, RED],
  ['B', 2123, 1100, '#000'],
  ['A', 2107, 1224, '#000'],
  ['(Y)', 2147, 1322, RED],
  ['C', 2145, 1311, '#000'],
];

const circled: [string, number, number][] = [
  ['W', 889, 1264],
  ['Y', 2281, 1489],
];

// label text, text centre, box top, box height, fill, text colour
const priceTags: [string, number, number, number, string, string][] = [
  ['96,42555', 684, 668, 33, '#df484c', '#fff'],
  ['96,42555', 718, 702, 33, '#df484c', '#fff'],
  ['86,51280', 853, 837, 33, '#808080', '#fff'],
  ['73,86340', 1051, 1035, 34, '#f19f38', '#0f0f0f'],
  ['70,14040', 1115, 1098, 64, '#df484c', '#fff'],
  ['67,60950', 1177, 1161, 34, '#df484c', '#fff'],
  ['53,00000', 1466, 1450, 33, '#459882', '#fff'],
];

function Bars() {
  return (
    <g>
      {series.map((s) =>
        s.bars.split(',').map((bar) => {
          const [x, high, low, color] = bar.split(' ');
          return (
            <rect
              key={bar}
              x={Math.round(s.x + Number(x) * s.kx) - 1}
              y={s.y + Number(high) * s.ky}
              width="2"
              height={(Number(low) - Number(high)) * s.ky}
              fill={barColors[color]}
            />
          );
        }),
      )}
    </g>
  );
}

function PatternLines() {
  return (
    <g fill="none" stroke="#000" strokeWidth="2">
      {series.map((s) =>
        s.lines
          .split(',')
          .filter(Boolean)
          .map((line) => {
            const points = line
              .split(' ')
              .map((v, i) => (i % 2 ? s.y + Number(v) * s.ky : s.x + Number(v) * s.kx))
              .join(' ');
            return <polyline key={line} points={points} />;
          }),
      )}
    </g>
  );
}

function UsFlag({ x, y }: { x: number; y: number }) {
  return (
    <g transform={`translate(${x} ${y})`}>
      <circle r="20.500" fill="#fff" stroke="#d94a52" strokeWidth="3" />
      <g clipPath="url(#flag)">
        <rect x="-16" y="-16" width="32" height="32" fill="#fff" />
        <path d="M-16 -13h32M-16 0h32M-16 12h32" stroke="#dc5a55" strokeWidth="6" />
        <rect x="-16" y="-16" width="20" height="19" fill="#3f7fd6" />
        <path d="M-12 -11h14M-12 -6h14M-12 -1h14" stroke="#fff" strokeWidth="2.500" strokeDasharray="3 2.500" />
      </g>
    </g>
  );
}

function Chart() {
  return (
    <svg width="2730" height="1608" viewBox="112 226 2730 1608">
      <defs>
        <clipPath id="flag">
          <circle r="16" />
        </clipPath>
      </defs>
      <g stroke="#f2f2f2" strokeWidth="2">
        {priceTicks.map(([, y]) => (
          <path key={y} d={`M112 ${y + 1}H2674`} />
        ))}
        {timeTicks.map(([, x]) => (
          <path key={x} d={`M${x + 1} 226V1778`} />
        ))}
      </g>
      <g fill="none" strokeWidth="2" stroke="#000">
        <path d="M1121 720L2224 1056.500M1336 1291L2147 1281" />
        <path d="M1116 719H2674" stroke={RED} />
        <circle cx="2185" cy="1044" r="13.500" />
      </g>
      <text x="2185" y="1051.500" fontSize="21" fontWeight="700" textAnchor="middle">X</text>
      <rect x="1827" y="720" width="414" height="134" fill="rgba(206, 76, 88, 0.21)" />
      <rect x="1827" y="854" width="414" height="613" fill="rgba(69, 152, 130, 0.22)" />
      <rect x="1832" y="854" width="409" height="262" fill="rgba(60, 170, 138, 0.21)" />
      <path d="M1827 854H2241" stroke="#808080" strokeWidth="2" />
      <path d="M1827 1467H2241" stroke="#b5dbd2" strokeWidth="2" />
      <path d="M1835 858L2176 1107" stroke="#808080" strokeWidth="2" strokeDasharray="10 10.500" />
      <path d="M112 1116.500H2674" stroke="#d5564f" strokeWidth="2" strokeDasharray="2 6" />
      <PatternLines />
      <Bars />
      <path d="M1891 1052H2674" stroke="#e5a23c" strokeWidth="2" />
      <path d="M2174 1162H2674" stroke={RED} strokeWidth="2" />
      <g fontSize="22.500" fontWeight="700" textAnchor="middle">
        {waveLabels.map(([text, x, y, color]) => (
          <text key={`${x}-${y}`} x={x} y={y + 8} fill={color} letterSpacing="0.800">{text}</text>
        ))}
      </g>
      {circled.map(([text, x, y]) => (
        <g key={text}>
          <circle cx={x} cy={y} r="13" fill="#fff" stroke="#000" strokeWidth="2" />
          <text x={x} y={y + 7.500} fontSize="21" fontWeight="700" textAnchor="middle">{text}</text>
        </g>
      ))}
      <circle cx="2217" cy="1752" r="20.500" fill="#fff" stroke="#d94a52" strokeWidth="3" />
      <UsFlag x={2212} y={1752} />
      <UsFlag x={2197} y={1752} />
      <g fontSize="24" fill="#0f0f0f">
        {priceTicks.filter(([t]) => t).map(([text, y]) => (
          <text key={text} x="2693" y={y + 9} textLength={text.length > 8 ? 127 : 112}>{text}</text>
        ))}
      </g>
      {priceTags.map(([text, cy, top, h, fill, color]) => (
        <g key={top}>
          <path
            d={`M2676 ${top}h136q4 0 4 4v${h - 8}q0 4 -4 4H2676z`}
            fill={fill}
          />
          <text x="2693" y={cy + 9} fontSize="24" fill={color} textLength="112">{text}</text>
        </g>
      ))}
      <text x="2693" y="1152" fontSize="24" fill="#f7b9bb" textLength="103">03:57:15</text>
      <path d="M2676 1152q4 0 6 3l7 7-7 7q-2 3-6 3z" fill="#0f0f0f" />
      <g fontSize="24" textAnchor="middle" fill="#0f0f0f">
        {timeTicks.map(([text, x]) => (
          <text key={text} x={x} y="1817" fontWeight={text === '2026' ? 700 : 400}>{text}</text>
        ))}
      </g>
      <g fill="none" stroke="#0f0f0f" strokeWidth="2">
        <path d="M2751.500 1796h14l7 12-7 12h-14l-7-12z" />
        <circle cx="2758.500" cy="1808" r="4.500" />
      </g>
      <g fill="#0f0f0f" stroke="#fff" strokeWidth="8" paintOrder="stroke">
        <path d="M136 1720h24v30h-12v-18h-12z" />
        <circle cx="170" cy="1726" r="6" />
        <path d="M182 1720h13l-13 30h-13z" />
        <text x="209" y="1750" fontSize="41" fontWeight="700" textLength="243">TradingView</text>
      </g>
    </svg>
  );
}

function MenuWallpaper() {
  return (
    <Wallpaper width="2940" height="110" viewBox="0 0 2940 110">
      <defs>
        <linearGradient id="sky" x1="0" x2="1">
          <stop offset="0" stopColor="#d3d4d9" />
          <stop offset="0.250" stopColor="#dadce7" />
          <stop offset="1" stopColor="#dcdfeb" />
        </linearGradient>
        <linearGradient id="steel" gradientUnits="userSpaceOnUse" x1="2176" y1="33" x2="2271" y2="198">
          <stop offset="0" stopColor="#c2c4ca" />
          <stop offset="0.400" stopColor="#8593b2" />
          <stop offset="0.550" stopColor="#a9b3cc" />
          <stop offset="1" stopColor="#a9b3cc" />
        </linearGradient>
        <linearGradient id="haze" gradientUnits="userSpaceOnUse" x1="2380" y1="33" x2="2460" y2="171">
          <stop offset="0" stopColor="#b9c0d4" />
          <stop offset="0.500" stopColor="#dcdee8" />
          <stop offset="1" stopColor="#b4b6be" />
        </linearGradient>
        <linearGradient id="dusk" gradientUnits="userSpaceOnUse" x1="2600" y1="33" x2="2730" y2="258">
          <stop offset="0" stopColor="#77787d" />
          <stop offset="1" stopColor="#858687" />
        </linearGradient>
      </defs>
      <rect width="2940" height="110" fill="url(#sky)" />
      <path d="M2104 66L2219 0H2940V66z" fill="#eef0f3" />
      <path d="M2119 66L2234 0H2940V66z" fill="#b9bcc4" />
      <path d="M2134 66L2249 0H2940V66z" fill="#f2f2f0" />
      <path d="M2160 66L2275 0H2940V66z" fill="url(#steel)" />
      <path d="M2345 66L2460 0H2940V66z" fill="url(#haze)" />
      <path d="M2498 66L2613 0H2940V66z" fill="#6f727b" />
      <path d="M2522 66L2637 0H2940V66z" fill="#c5c8d4" />
      <path d="M2560 66L2675 0H2940V110H2560z" fill="url(#dusk)" />
      <path d="M2748 66L2888 0H2940V110H2748z" fill="#9aa5cc" />
      <path d="M2756 66L2896 0H2940V110H2756z" fill="#797e8b" />
    </Wallpaper>
  );
}

function TopMenu() {
  return (
    <MenuBar>
      <Slot $w={32} $ml={38}>
        <svg width="27" height="32" viewBox="0 0 27 32">
          <path d="M18.500 0c.3 2.200-.6 4.100-1.800 5.500-1.200 1.400-3 2.300-4.800 2.200-.3-2.100.7-4.100 1.800-5.300C15 1 17 .1 18.500 0zM25.500 11c-2.300 1.500-3.600 3.500-3.500 6 0 3 1.800 5.200 4.500 6.200-.8 2.300-2 4.300-3.500 6.300-1.300 1.700-2.600 2.300-4.200 2.200-1.800-.1-2.600-1-4.800-1s-3.100.9-4.800 1c-1.800.1-3.100-.8-4.500-2.600C.7 23.900-1 16.500 1.800 11.800c1.500-2.500 3.900-4 6.500-4 2.100 0 3.800 1.300 5.500 1.300 1.600 0 3.300-1.500 6-1.400 2.400.1 4.400 1.200 5.700 3.300z" />
        </svg>
      </Slot>
      <Label $w={160} $ml={38} $weight={700} $size={26}>TradingView</Label>
      <Label $w={124} $ml={42} $size={26}>Изменить</Label>
      <Label $w={66} $ml={42} $size={26}>Окно</Label>
      <Label $w={48} $ml={42} $size={26}>Вид</Label>
      <Spacer />
      <Slot $w={30}>
        <svg width="30" height="30" viewBox="0 0 30 30" stroke="#161616" strokeWidth="2.500" strokeLinecap="round">
          <circle cx="15" cy="15" r="6" fill="#161616" />
          <path d="M15 2v2M15 26v2M2 15h2M26 15h2M5.800 5.800l1.400 1.400M22.800 22.800l1.400 1.400M5.800 24.200l1.400-1.400M22.800 7.200l1.400-1.400" />
        </svg>
      </Slot>
      <Label $w={68} $ml={7} $size={26}>22 °C</Label>
      <Slot $w={28} $ml={40}>
        <svg width="28" height="32" viewBox="0 0 28 32" fill="none" stroke="#161616" strokeWidth="2">
          <path d="M7 23l13-13.500-6.500-6.500v26l6.500-6.500L7 9M3 4l22 24" />
        </svg>
      </Slot>
      <InputBadge $w={44} $ml={40}>РУ▾</InputBadge>
      <Slot $w={36} $ml={42}>
        <svg width="36" height="28" viewBox="0 0 36 28" fill="none" stroke="#161616" strokeWidth="4">
          <path d="M3 10.500c8.500-8.300 21.500-8.300 30 0M9 17c5.300-5 12.700-5 18 0" />
          <path d="M18 26l-5-5.500c3-2.500 7-2.500 10 0z" fill="#161616" stroke="none" />
        </svg>
      </Slot>
      <Slot $w={30} $ml={37}>
        <svg width="30" height="30" viewBox="0 0 30 30" fill="none" stroke="#161616" strokeWidth="2.500">
          <circle cx="15" cy="15" r="12.500" />
          <path d="M12 10l8 5-8 5z" fill="#161616" strokeWidth="1" />
        </svg>
      </Slot>
      <Label $w={54} $ml={35} $size={23}>83 %</Label>
      <Slot $w={52} $ml={8}>
        <svg width="52" height="26" viewBox="0 0 52 26">
          <rect x="1" y="1" width="44" height="23" rx="7" fill="none" stroke="#85858a" strokeWidth="2" />
          <rect x="4" y="4" width="33" height="17" rx="4" fill="#161616" />
          <path d="M48 8.500c2.500 1 2.500 6.500 0 7.500z" fill="#85858a" />
          <path d="M26 1L14 14h8l-3 11 13-14h-8z" fill="#161616" stroke="#c9cbd2" strokeWidth="2" />
        </svg>
      </Slot>
      <Slot $w={30} $ml={43}>
        <svg width="28" height="28" viewBox="0 0 28 28" fill="none" stroke="#161616" strokeWidth="2.500">
          <rect x="1.500" y="1.500" width="25" height="11" rx="5.500" />
          <circle cx="8" cy="7" r="3.500" fill="#161616" />
          <rect x="1.500" y="15.500" width="25" height="11" rx="5.500" fill="#161616" />
          <circle cx="20.500" cy="21" r="3.500" fill="#c9cbd2" stroke="none" />
        </svg>
      </Slot>
      <Label $w={152} $ml={46} $size={26.500}>Пн, 15 июня</Label>
      <Label $w={72} $ml={16} $size={26.500}>20:02</Label>
      <Slot $w={33} />
    </MenuBar>
  );
}

function Tabs() {
  return (
    <TabStrip>
      <Lights>
        <Light $color="#ec6762" />
        <Light $color="#efc63f" />
        <Light $color="#61c15c" />
      </Lights>
      <TabFill>
        <Tab $active $w={480}>
          <Slot $w={36} $ml={24}><SilverLogo /></Slot>
          <Label $w={112} $ml={8} $weight={600} $size={26}>XAGUSD</Label>
          <Slot $w={18} $ml={8}><Up /></Slot>
          <Label $w={122} $ml={8} $size={27}>70,14040</Label>
          <Change $tone="#fff" $w={90} $ml={8} $size={26}>+3.09%</Change>
          <Slot $w={28} $ml={4}><Close /></Slot>
        </Tab>
        <TabRest>
          <Slot $w={36} $ml={24}>
            <svg width="36" height="36" viewBox="0 0 36 36" fill="none" stroke="#111" strokeWidth="2.400">
              <circle cx="18" cy="18" r="18" fill="#f4f5f9" stroke="none" />
              <circle cx="18" cy="18" r="9" />
              <path d="M9.500 18H27M25.500 14h-6.500a4 4 0 0 0 0 8h6.500" />
            </svg>
          </Slot>
          <Label $w={131} $ml={8} $weight={600} $size={26}>WLDUSDT</Label>
          <Slot $w={18} $ml={9}><Up /></Slot>
          <Label $w={88} $ml={9} $size={27.500}>0,5771</Label>
          <Change $tone="#ebebeb" $w={104} $ml={9} $size={26}>+10.24%</Change>
          <Slot $w={28} $ml={2}><Close /></Slot>
          <Divider $ml={14} />
          <Slot $w={28} $ml={20}>
            <svg width="28" height="28" viewBox="0 0 28 28" stroke="#757575" strokeWidth="2">
              <path d="M14 1v26M1 14h26" />
            </svg>
          </Slot>
          <Spacer />
          <svg width="48" height="34" viewBox="0 0 48 34" fill="none" stroke="#757575" strokeWidth="2">
            <rect x="2" y="2" width="44" height="17" rx="2" />
            <path d="M24 2v29M17 31h14" />
          </svg>
          <Divider $ml={26} />
          <Slot $w={44} $ml={29}>
            <svg width="40" height="12" viewBox="0 0 40 12" fill="none" stroke="#757575" strokeWidth="2">
              <circle cx="6" cy="6" r="4" />
              <circle cx="20" cy="6" r="4" />
              <circle cx="34" cy="6" r="4" />
            </svg>
          </Slot>
          <Slot $w={26} />
        </TabRest>
      </TabFill>
    </TabStrip>
  );
}

function ChartToolbar() {
  return (
    <Toolbar>
      <Avatar $w={52} $ml={26}>W</Avatar>
      <SymbolPill>
        <Label $w={120} $ml={23} $weight={600} $size={27}>XAGUSD</Label>
        <Knob $w={50} $ml={59}>
          <Icon size={48}>
            <path d="M9.500 6h9l4.500 5-9 11.500L5 11z" strokeLinejoin="round" />
            <path d="M11 12h6M14 8.500v9" />
            <rect x="12.500" y="10" width="3" height="4.500" fill="#0f0f0f" />
          </Icon>
        </Knob>
      </SymbolPill>
      <Slot $ml={20}>
        <Icon>
          <circle cx="14" cy="14" r="9.300" />
          <path d="M14 9.500v9M9.500 14h9" />
        </Icon>
      </Slot>
      <Divider $ml={19} />
      <Label $w={38} $ml={21}>1м</Label>
      <Label $w={40} $ml={23}>5м</Label>
      <Label $w={56} $ml={23}>15м</Label>
      <Label $w={34} $ml={23}>1ч</Label>
      <ActiveInterval $w={48} $ml={15}>4ч</ActiveInterval>
      <Label $w={26} $ml={14}>Д</Label>
      <Label $w={24} $ml={19}>Н</Label>
      <Slot $ml={7}><Chevron /></Slot>
      <Divider $ml={4} />
      <Slot $ml={20}>
        <Icon>
          <path d="M8.500 4v3M8.500 22v4M18.500 6.500V10M18.500 18v4" />
          <rect x="6" y="7" width="5" height="15" rx=".5" />
          <rect x="16" y="10" width="5" height="8" rx=".5" />
        </Icon>
      </Slot>
      <Divider $ml={17} />
      <Slot $ml={18}>
        <Icon>
          <path d="M5.500 11.500l5.500-6 4 4L23 3M5.500 24.500h17v-13h-4.700v13M5.500 24.500v-4.500h4v4.500M9.500 20v-4.500h4.500v9M14 18h4" />
        </Icon>
      </Slot>
      <Slot $ml={5}><Chevron /></Slot>
      <Slot $ml={6}>
        <Icon>
          <rect x="6" y="5" width="6.500" height="7" rx="2" />
          <rect x="15" y="5" width="6.500" height="7" rx="2" />
          <rect x="6" y="16" width="6.500" height="7" rx="2" />
          <rect x="15" y="16" width="6.500" height="7" rx="2" />
        </Icon>
      </Slot>
      <Divider $ml={18} />
      <Slot $ml={18}>
        <Icon>
          <path d="M22 15a8.500 8.500 0 1 0-8.500 8.800M13.500 9v6.500H10M3.500 9l4-5M23 9l-4-5M20 17v9.500M15.500 21.500H25" />
        </Icon>
      </Slot>
      <Slot $ml={21}>
        <Icon>
          <path d="M12.500 7.500v13L6 14zM21 7.500v13L14.500 14z" strokeLinejoin="round" />
        </Icon>
      </Slot>
      <Divider $ml={18} />
      <Slot $ml={17}>
        <Icon><path d="M10.500 8L6.500 12l4 4M6.500 12h8a6 6 0 0 1 6 6v.500" /></Icon>
      </Slot>
      <Slot $ml={18}>
        <Icon color="#8c8c8c"><path d="M17.500 8l4 4-4 4M21.500 12h-8a6 6 0 0 0-6 6v.500" /></Icon>
      </Slot>
      <Spacer />
      <Slot $w={40}>
        <Icon size={40} sw={1.500}><rect x="1.500" y="2.500" width="25" height="22.500" rx="3" /></Icon>
      </Slot>
      <LayoutName>
        <Label $size={27}>Волны</Label>
        <Label $size={20} $ls={0.200} $color="#3d64e0">Сохранить</Label>
      </LayoutName>
      <Slot $ml={7}><Chevron /></Slot>
      <Divider $ml={4} />
      <Slot $ml={18}>
        <Icon>
          <path d="M11 5.500a8.200 8.200 0 1 0 9 11.500M18 20l5.500 4.500M16.500 3.500L10.500 13h4.500l-1 6 7-9h-5z" strokeLinejoin="round" />
        </Icon>
      </Slot>
      <Slot $ml={20}>
        <Icon>
          <path d="M9 5h10l5 9-5 9H9l-5-9z" strokeLinejoin="round" />
          <circle cx="14" cy="14" r="3.600" />
        </Icon>
      </Slot>
      <Slot $ml={20}>
        <Icon><path d="M6.500 10.500V8a2.500 2.500 0 0 1 2.500-2.500h2.500M17 5.500h2.500A2.500 2.500 0 0 1 22 8v2.500M22 17.500V20a2.500 2.500 0 0 1-2.500 2.500H17M11.500 22.500H9A2.500 2.500 0 0 1 6.500 20v-2.500" /></Icon>
      </Slot>
      <Slot $ml={19}>
        <Icon>
          <path d="M6 7.500h4L11.500 5h5L18 7.500h4a2 2 0 0 1 2 2V20a2 2 0 0 1-2 2H6a2 2 0 0 1-2-2V9.500a2 2 0 0 1 2-2z" strokeLinejoin="round" />
          <circle cx="14" cy="14.500" r="4" />
        </Icon>
      </Slot>
      <PillButton $w={184} $ml={20}>Торговать</PillButton>
      <PillButton $dark $w={239} $ml={16}>Опубликовать</PillButton>
      <Slot $w={10} />
    </Toolbar>
  );
}

function ChartLegend() {
  return (
    <Legend>
      <Slot $w={36} $ml={2}><SilverLogo /></Slot>
      <Label $w={552} $ml={8} $size={30.400}>Серебро / Доллар США · 4ч · OANDA</Label>
      <Slot $w={26} $ml={22}>
        <svg width="26" height="26" viewBox="0 0 26 26">
          <path d="M1 1h24l-6 12 6 12H1z" fill="#ea5c59" />
        </svg>
      </Slot>
      <StatusPill>
        <svg width="16" height="16" viewBox="0 0 16 16"><circle cx="8" cy="8" r="8" fill="#2f6b58" /></svg>
        <svg width="24" height="18" viewBox="0 0 24 18" fill="none" stroke="#a3195b" strokeWidth="3">
          <path d="M2 6c5-6 9-1 11 0 3 1.500 6 1 9-2M2 14c5-6 9-1 11 0 3 1.500 6 1 9-2" />
        </svg>
      </StatusPill>
      <Label $w={70} $ml={16} $size={26}>ОТКР</Label>
      <Label $w={121} $ml={2} $size={26.500} $ls={0.300} $color="#d64a4f">70,32200</Label>
      <Label $w={76} $ml={12} $size={26}>МАКС</Label>
      <Label $w={121} $ml={1} $size={26.500} $ls={0.300} $color="#d64a4f">70,32200</Label>
      <Label $w={62} $ml={13} $size={26}>МИН</Label>
      <Label $w={121} $ml={1} $size={26.500} $ls={0.300} $color="#d64a4f">70,08900</Label>
      <Label $w={69} $ml={11} $size={26}>ЗАКР</Label>
      <Label $w={121} $ml={1} $size={26.500} $ls={0.300} $color="#d64a4f">70,14040</Label>
      <Label $w={244} $ml={11} $size={26.500} $ls={0.600} $color="#d64a4f">−0,18310 (−0,26%)</Label>
    </Legend>
  );
}

const ranges: [string, number, number][] = [
  ['1Д', 36, 0],
  ['5Д', 38, 24],
  ['1М', 40, 25],
  ['3М', 40, 25],
  ['6М', 41, 25],
  ['YTD', 56, 24],
  ['1Г', 32, 25],
  ['5Л', 36, 25],
  ['Все', 50, 24],
];

export default function App() {
  return (
    <Page>
      <GlobalStyle />
      <MenuWallpaper />
      <TopMenu />
      <AppWindow>
        <Tabs />
        <ChartToolbar />
        <Workspace>
          <LeftRail>
            <RailItem>
              <ActiveTool>
                <Icon><path d="M14.300 3v8M14.300 17v8M3 14h8M17.500 14h8" /></Icon>
              </ActiveTool>
            </RailItem>
            {leftTools.map((group, i) => (
              <React.Fragment key={i}>
                {group.map((icon, j) => (
                  <RailItem key={j}>{icon}</RailItem>
                ))}
                <RailRule />
              </React.Fragment>
            ))}
            <RailItem>
              <Icon>
                <path d="M5 6.500h18M10.500 6.500V5c0-1 .5-1.500 1.500-1.500h4c1 0 1.500.5 1.500 1.500v1.500M7 6.500l1.200 16c.1 1.200.8 2 2 2h7.600c1.200 0 1.900-.8 2-2L21 6.500" />
              </Icon>
            </RailItem>
            <Spacer />
            <StarButton>
              <Icon size={48} color="#fff" sw={1.300}>
                <path d="M14 3.500l3.200 7 7.800 1-5.700 5.200 1.500 7.500L14 20.500l-6.800 3.700 1.500-7.500L3 11.500l7.800-1z" strokeLinejoin="round" />
              </Icon>
            </StarButton>
          </LeftRail>
          <ChartColumn>
            <ChartArea>
              <Chart />
              <ChartLegend />
              <DrawingBar>
                <Slot $w={48}>
                  <svg width="18" height="26" viewBox="0 0 18 26" fill="#b5b5b5">
                    {[3, 13, 23].map((y) => (
                      <React.Fragment key={y}>
                        <circle cx="3" cy={y} r="2.200" />
                        <circle cx="15" cy={y} r="2.200" />
                      </React.Fragment>
                    ))}
                  </svg>
                </Slot>
                {drawingTools.map((icon, i) => (
                  <Slot key={i} $w={76}>{icon}</Slot>
                ))}
              </DrawingBar>
            </ChartArea>
            <RangeBar>
              {ranges.map(([text, w, ml]) => (
                <Label key={text} $w={w} $ml={ml} $size={26}>{text}</Label>
              ))}
              <Divider $ml={22} />
              <Slot $ml={14}>
                <Icon>
                  <path d="M4.500 12V7a2 2 0 0 1 2-2h15a2 2 0 0 1 2 2v14a2 2 0 0 1-2 2H14M4.500 9h19M9.500 2.500v5M18.500 2.500v5M4 19h8M9 15.500l3.500 3.500L9 22.500" />
                </Icon>
              </Slot>
              <Spacer />
              <Label $w={222} $size={26.500} $ls={0.400}>20:02:45 UTC+3</Label>
              <Slot $w={18} />
            </RangeBar>
          </ChartColumn>
          <RightRail>
            {topWidgets.map((icon, i) => (
              <WidgetItem key={i}>{icon}</WidgetItem>
            ))}
            <Spacer />
            {bottomWidgets.map((icon, i) => (
              <WidgetItem key={i} $h={90.400}>{icon}</WidgetItem>
            ))}
            <WidgetItem $h={90.400}>
              <AppsButton>
                <svg width="40" height="40" viewBox="0 0 40 40" fill="#fff">
                  {[2, 16, 30].map((y) =>
                    [2, 16, 30].map((x) => <rect key={`${x}${y}`} x={x} y={y} width="8" height="8" rx="2.500" />),
                  )}
                </svg>
              </AppsButton>
            </WidgetItem>
            <RailRule $gap={10} />
            <WidgetItem>
              <Icon>
                <circle cx="14" cy="14" r="13" />
                <path d="M9.500 10.500c0-5 9-5 9 0 0 3.500-4.500 3-4.500 6.500" />
                <circle cx="14" cy="20.500" r="1.200" />
              </Icon>
            </WidgetItem>
          </RightRail>
        </Workspace>
      </AppWindow>
    </Page>
  );
}
